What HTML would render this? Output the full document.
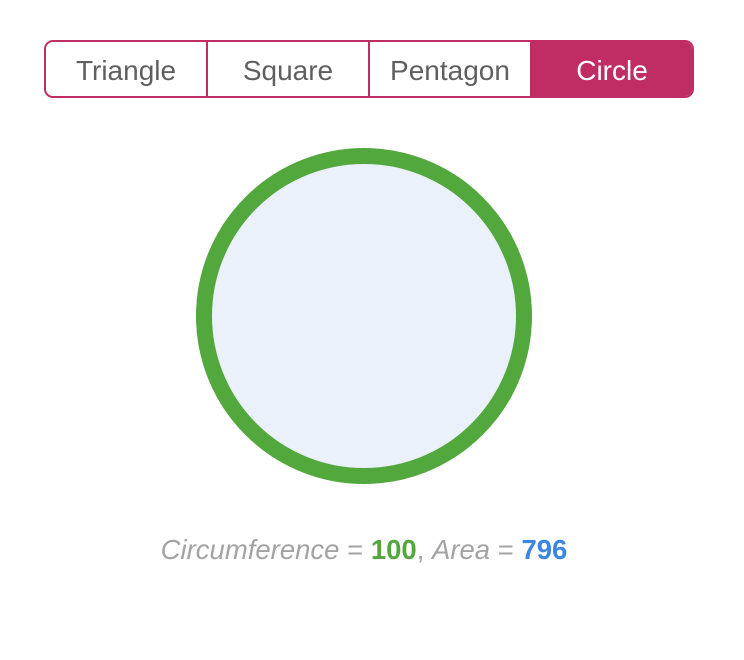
<!DOCTYPE html>
<html><head><style>
body{margin:0;width:744px;height:660px;background:#fff;font-family:"Liberation Sans",sans-serif;position:relative;overflow:hidden}
.bar{position:absolute;left:44px;top:40px;width:650px;height:58px;box-sizing:border-box;border:2px solid #c02d65;border-radius:9px;display:flex;overflow:hidden}
.bar div{flex:1;display:flex;align-items:center;justify-content:center;font-size:28px;color:#5f5f5f;border-right:2px solid #c02d65;padding-top:3px}
.bar div:last-child{border-right:none;background:#c02d65;color:#fff}
.cap{position:absolute;top:534px;left:0;width:728px;text-align:center;font-size:27.5px;color:#a3a3a3}
</style></head><body>
<div class="bar"><div>Triangle</div><div>Square</div><div>Pentagon</div><div>Circle</div></div>
<svg style="position:absolute;left:0;top:0" width="744" height="660"><circle cx="364" cy="316" r="160" fill="#eaf1fb" stroke="#52a83c" stroke-width="16"/></svg>
<div class="cap"><i>Circumference</i> = <b style="color:#52a83c">100</b>, <i>Area</i> = <b style="color:#3a86e0">796</b></div>
</body></html>
